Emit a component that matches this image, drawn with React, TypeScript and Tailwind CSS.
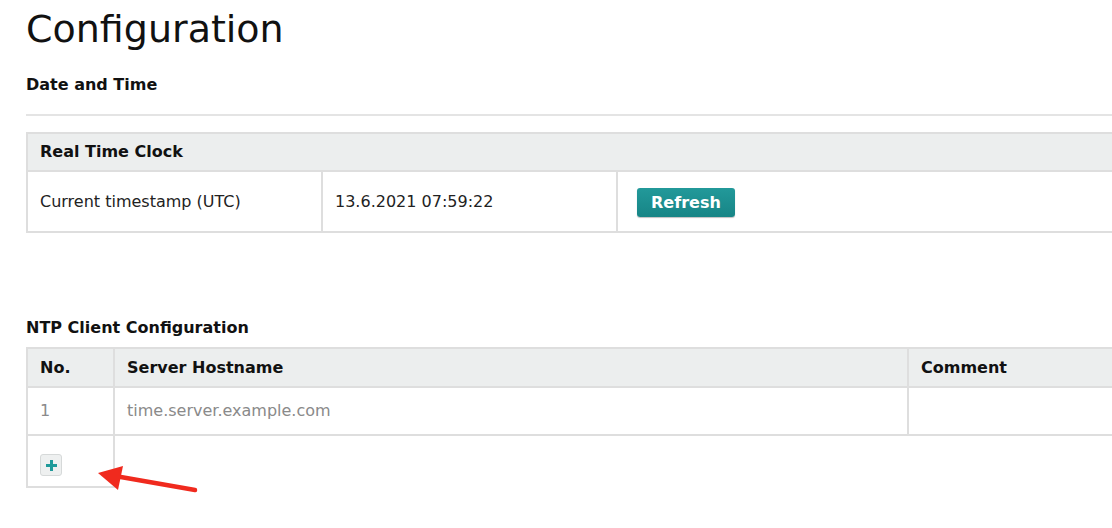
export default function App() {
  return (
    <div
      className="w-[1112px] h-[528px] overflow-hidden bg-white relative text-[#222]"
      style={{ fontFamily: '"DejaVu Sans", Verdana, sans-serif' }}
    >
      <div className="w-[1130px] pl-[26px] pt-[7px]">
        <h1 className="text-[38px] leading-[44px] text-[#111]">Configuration</h1>

        <h2 className="mt-[24px] text-[16px] leading-[20px] font-bold text-[#111]">Date and Time</h2>
        <div className="mt-[19px] border-t-2 border-[#e4e4e4]" />

        {/* Real Time Clock */}
        <div className="mt-[16px] border-2 border-r-0 border-[#dedede]">
          <div className="h-[38px] flex items-center px-[12px] bg-[#eceeee] border-b-2 border-[#dedede] text-[16px] font-bold text-[#111]">
            Real Time Clock
          </div>
          <div className="h-[59px] flex text-[16px]">
            <div className="w-[295px] border-r-2 border-[#dedede] flex items-center px-[12px]">
              Current timestamp (UTC)
            </div>
            <div className="w-[295px] border-r-2 border-[#dedede] flex items-center px-[12px]">
              13.6.2021 07:59:22
            </div>
            <div className="flex-1 flex items-center px-[19px] pt-[2px]">
              <button className="h-[29px] px-[14px] rounded-[3px] bg-gradient-to-b from-[#22999a] to-[#178586] text-white text-[16px] font-bold shadow-[0_1px_1px_rgba(0,0,0,0.25)]">
                Refresh
              </button>
            </div>
          </div>
        </div>

        <h2 className="mt-[85px] text-[16px] leading-[20px] font-bold text-[#111]">NTP Client Configuration</h2>

        {/* NTP table */}
        <div className="mt-[9px]">
          <div className="flex h-[41px] bg-[#eceeee] border-2 border-r-0 border-[#dedede] text-[16px] font-bold text-[#111]">
            <div className="w-[87px] border-r-2 border-[#dedede] flex items-center px-[12px]">No.</div>
            <div className="w-[794px] border-r-2 border-[#dedede] flex items-center px-[12px]">Server Hostname</div>
            <div className="flex-1 flex items-center px-[12px]">Comment</div>
          </div>
          <div className="flex h-[48px] border-2 border-t-0 border-r-0 border-[#dedede] text-[16px] text-[#8a8a8a]">
            <div className="w-[87px] border-r-2 border-[#dedede] flex items-center px-[12px]">1</div>
            <div className="w-[794px] border-r-2 border-[#dedede] flex items-center px-[12px]">time.server.example.com</div>
            <div className="flex-1" />
          </div>
          <div className="flex h-[52px]">
            <div className="w-[89px] border-2 border-t-0 border-[#dedede] flex items-end pb-[10px] pl-[12px]">
              <button className="w-[22px] h-[22px] rounded-[3px] bg-[#eef0f0] border border-[#d6d9d9] flex items-center justify-center">
                <svg width="13" height="13" viewBox="0 0 13 13">
                  <path d="M6.5 1v11M1 6.5h11" stroke="#1f9a9a" strokeWidth="3" />
                </svg>
              </button>
            </div>
          </div>
        </div>
      </div>

      {/* red annotation arrow */}
      <svg className="absolute left-0 top-0 pointer-events-none" width="220" height="528">
        <line x1="195" y1="490" x2="115" y2="476" stroke="#f02a1e" strokeWidth="4.5" strokeLinecap="round" />
        <polygon points="98,473 123,466 118,490" fill="#f02a1e" />
      </svg>
    </div>
  );
}
